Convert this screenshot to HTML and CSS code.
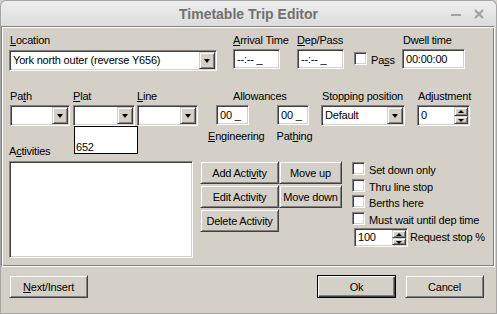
FILE: index.html
```html
<!DOCTYPE html>
<html>
<head>
    <title>Timetable Trip Editor</title>
    <link rel="stylesheet" href="styles.css">
</head>
<body>
    <div class="window">
        <div class="titlebar">
            <span class="title">Timetable Trip Editor</span>
            <div class="wm-buttons">
                <svg class="wm-min" width="12" height="12" viewBox="0 0 12 12"><rect x="1" y="6" width="10" height="2" fill="#a2a2a2"/></svg>
                <svg class="wm-close" width="12" height="12" viewBox="0 0 12 12"><path d="M2 2 L10 10 M10 2 L2 10" stroke="#a2a2a2" stroke-width="2.2"/></svg>
            </div>
        </div>
        <div class="frame">
            <div class="panel">
                <div class="row row-top">
                    <div class="col col-location">
                        <label class="lbl"><u>L</u>ocation</label>
                        <div class="field combo combo-location">
                            <span class="field-text">York north outer (reverse Y656)</span>
                            <span class="drop"></span>
                        </div>
                    </div>
                    <div class="col col-arrival">
                        <label class="lbl"><u>A</u>rrival Time</label>
                        <div class="field edit edit-time"><span class="field-text">--:-- _</span></div>
                    </div>
                    <div class="col col-dep">
                        <label class="lbl"><u>D</u>ep/Pass</label>
                        <div class="field edit edit-time"><span class="field-text">--:-- _</span></div>
                    </div>
                    <div class="check check-pass">
                        <span class="box"></span>
                        <span class="check-label">Pa<u>s</u>s</span>
                    </div>
                    <div class="col col-dwell">
                        <label class="lbl">Dwell time</label>
                        <div class="field edit edit-dwell"><span class="field-text">00:00:00</span></div>
                    </div>
                </div>

                <div class="row row-mid">
                    <div class="col col-path">
                        <label class="lbl">Pa<u>t</u>h</label>
                        <div class="field combo"><span class="drop"></span></div>
                    </div>
                    <div class="col col-plat">
                        <label class="lbl"><u>P</u>lat</label>
                        <div class="field combo combo-plat">
                            <span class="drop"></span>
                            <div class="droplist">
                                <div class="droplist-item"></div>
                                <div class="droplist-item">652</div>
                            </div>
                        </div>
                    </div>
                    <div class="col col-line">
                        <label class="lbl"><u>L</u>ine</label>
                        <div class="field combo"><span class="drop"></span></div>
                    </div>
                    <div class="allowances">
                        <label class="lbl allow-head">Allowances</label>
                        <div class="allow-inputs">
                            <div class="field edit edit-eng"><span class="field-text">00 _</span></div>
                            <div class="field edit edit-pth"><span class="field-text">00 _</span></div>
                        </div>
                        <div class="allow-labels">
                            <span class="lbl"><u>E</u>ngineering</span>
                            <span class="lbl lbl-pathing">Pat<u>h</u>ing</span>
                        </div>
                    </div>
                    <div class="col col-stop">
                        <label class="lbl">Stopping position</label>
                        <div class="field combo">
                            <span class="field-text">Default</span>
                            <span class="drop"></span>
                        </div>
                    </div>
                    <div class="col col-adj">
                        <label class="lbl">Adjustment</label>
                        <div class="field spin">
                            <span class="field-text">0</span>
                            <span class="spin-btns"><span class="spin-up"></span><span class="spin-down"></span></span>
                        </div>
                    </div>
                </div>

                <div class="row row-bottom">
                    <div class="col col-activities">
                        <label class="lbl">A<u>c</u>tivities</label>
                        <div class="field listbox"></div>
                    </div>
                    <div class="activity-btns">
                        <button class="btn">Add Acti<u>v</u>ity</button>
                        <button class="btn">Move up</button>
                        <button class="btn">Edit Activity</button>
                        <button class="btn">Move down</button>
                        <button class="btn">Delete Activity</button>
                    </div>
                    <div class="checks">
                        <div class="check"><span class="box"></span><span class="check-label">Set down only</span></div>
                        <div class="check"><span class="box"></span><span class="check-label">Thru line stop</span></div>
                        <div class="check"><span class="box"></span><span class="check-label">Berths here</span></div>
                        <div class="check"><span class="box"></span><span class="check-label">Must wait until dep time</span></div>
                        <div class="request">
                            <div class="field spin spin-request">
                                <span class="field-text">100</span>
                                <span class="spin-btns"><span class="spin-up"></span><span class="spin-down"></span></span>
                            </div>
                            <span class="check-label">Request stop %</span>
                        </div>
                    </div>
                </div>
            </div>

            <div class="footer">
                <button class="btn btn-footer"><u>N</u>ext/Insert</button>
                <button class="btn btn-footer btn-default">Ok</button>
                <button class="btn btn-footer">Cancel</button>
            </div>
        </div>
    </div>
</body>
</html>
```

FILE: styles.css
```css
body {
    margin: 0;
    font-family: "Liberation Sans", Arial, sans-serif;
    font-size: 11px;
    letter-spacing: -0.2px;
    color: #000;
    background: #d4d0c8;
}

.window {
    width: 497px;
    height: 314px;
    display: flex;
    flex-direction: column;
}

/* title bar */
.titlebar {
    height: 26px;
    box-sizing: border-box;
    border: 1px solid #a6a6a6;
    border-bottom: none;
    border-radius: 6px 6px 0 0;
    background: linear-gradient(#eeeeee, #dcdcdc);
    display: grid;
    grid-template-columns: 1fr auto 1fr;
    align-items: center;
}

.title {
    grid-column: 2;
    font-weight: bold;
    font-size: 14px;
    letter-spacing: 0;
    color: #717171;
    padding-top: 1px;
}

.wm-buttons {
    grid-column: 3;
    justify-self: end;
    display: flex;
    align-items: center;
    gap: 11px;
    margin-right: 11px;
}

.wm-buttons svg {
    display: block;
}

/* window body */
.frame {
    flex: 1;
    display: flex;
    flex-direction: column;
    border: 1px solid #a6a6a6;
    border-top: none;
}

.panel {
    height: 241px;
    box-sizing: border-box;
    border: 1px solid #808080;
    border-right-color: #fff;
    border-bottom-color: #fff;
    box-shadow: inset 1px 1px 0 #fff, inset -1px -1px 0 #808080;
    margin-right: 1px;
}

.row {
    display: flex;
    align-items: flex-start;
}

.col {
    display: flex;
    flex-direction: column;
}

.lbl {
    display: block;
    line-height: 13px;
    white-space: nowrap;
}

/* sunken fields */
.field {
    position: relative;
    box-sizing: border-box;
    background: #fff;
    border: 1px solid;
    border-color: #808080 #fff #fff #808080;
    box-shadow: inset 1px 1px 0 #404040, inset -1px -1px 0 #d4d0c8;
}

.field-text {
    display: block;
    line-height: 13px;
    padding: 3px 0 0 3px;
    white-space: nowrap;
}

.combo {
    height: 21px;
    margin-top: 2px;
}

.edit {
    height: 20px;
    margin-top: 2px;
}

.drop,
.spin-btns span,
.btn {
    background: #d4d0c8;
    border: 1px solid;
    border-color: #d4d0c8 #404040 #404040 #d4d0c8;
    box-shadow: inset 1px 1px 0 #fff, inset -1px -1px 0 #808080;
    box-sizing: border-box;
}

.drop {
    position: absolute;
    top: 1px;
    right: 1px;
    width: 16px;
    height: 17px;
}

.drop:after {
    content: "";
    position: absolute;
    left: 4px;
    top: 6px;
    border-left: 3.5px solid transparent;
    border-right: 3.5px solid transparent;
    border-top: 4px solid #000;
}

/* spin boxes */
.spin {
    height: 21px;
    margin-top: 2px;
}

.spin-btns {
    position: absolute;
    top: 1px;
    right: 1px;
    width: 14px;
    height: 17px;
    display: flex;
    flex-direction: column;
}

.spin-btns span {
    position: relative;
    flex: 1;
}

.spin-up:after,
.spin-down:after {
    content: "";
    position: absolute;
    left: 3px;
    border-left: 3px solid transparent;
    border-right: 3px solid transparent;
}

.spin-up:after {
    top: 2px;
    border-bottom: 3px solid #000;
}

.spin-down:after {
    top: 2px;
    border-top: 3px solid #000;
}

/* top row */
.row-top {
    margin-top: 7px;
}

.col-location {
    margin-left: 7px;
    width: 208px;
}

.col-location .lbl,
.col-dwell .lbl,
.col-stop .lbl,
.col-adj .lbl {
    padding-left: 1px;
}

.col-location .combo {
    margin-top: 3px;
}

.col-arrival {
    margin-left: 16px;
    width: 64px;
}

.col-dep {
    width: 57px;
}

.edit-time {
    width: 47px;
}

.check-pass {
    width: 48px;
    margin-top: 18px;
}

.col-dwell {
    width: 63px;
}

/* checkboxes */
.check {
    display: flex;
    align-items: flex-start;
    height: 16.5px;
}

.box {
    width: 13px;
    height: 13px;
    box-sizing: border-box;
    background: #fff;
    border: 1px solid;
    border-color: #808080 #fff #fff #808080;
    box-shadow: inset 1px 1px 0 #404040, inset -1px -1px 0 #d4d0c8;
    flex: none;
}

.check-label {
    line-height: 13px;
    margin-left: 4px;
    padding-top: 2px;
    white-space: nowrap;
}

/* middle row */
.row-mid {
    margin-top: 19px;
}

.col-path {
    margin-left: 8px;
    width: 60px;
}

.col-plat {
    margin-left: 3px;
    width: 62px;
}

.col-line {
    margin-left: 2px;
    width: 61px;
}

.combo-plat {
    z-index: 2;
}

.droplist {
    position: absolute;
    left: 0;
    top: 20px;
    width: 64px;
    height: 28px;
    box-sizing: border-box;
    background: #fff;
    border: 1px solid #000;
    padding-top: 1px;
}

.droplist-item {
    height: 13px;
    line-height: 13px;
    padding-left: 1px;
}

.allowances {
    margin-left: 10px;
    width: 113px;
}

.allow-head {
    padding-left: 25px;
}

.allow-inputs {
    display: flex;
    margin-left: 8px;
    margin-top: 2px;
}

.edit-eng {
    width: 33px;
    margin-top: 0;
}

.edit-pth {
    width: 32px;
    margin-top: 0;
    margin-left: 28px;
}

.allow-labels {
    display: flex;
    margin-top: 5px;
}

.lbl-pathing {
    margin-left: 12px;
}

.col-stop {
    width: 84px;
}

.col-adj {
    margin-left: 12px;
    width: 53px;
}

/* bottom row */
.row-bottom {
    margin-top: 2px;
}

.col-activities {
    margin-left: 7px;
    width: 184px;
}

.listbox {
    height: 97px;
    margin-top: 3px;
}

.activity-btns {
    margin-left: 7px;
    margin-top: 16px;
    display: grid;
    grid-template-columns: 79px 63px;
    grid-auto-rows: 23px;
    row-gap: 1px;
}

.btn {
    font-family: inherit;
    font-size: 11px;
    letter-spacing: inherit;
    color: #000;
    padding: 0;
    margin: 0;
    cursor: pointer;
}

.checks {
    margin-left: 10px;
    margin-top: 17px;
}

.request {
    display: flex;
    align-items: flex-start;
    margin-left: 2px;
}

.spin-request {
    width: 54px;
    height: 19px;
    margin-top: 0;
}

.spin-request .field-text {
    padding-top: 2px;
}

.spin-request .spin-btns {
    height: 15px;
}

.request .check-label {
    margin-left: 2px;
    padding-top: 3px;
}

/* footer */
.footer {
    display: flex;
    margin-top: 8px;
}

.btn-footer {
    width: 79px;
    height: 23px;
    margin-left: 8px;
}

.btn-default {
    margin-left: 229px;
    border-color: #000;
    box-shadow: inset 1px 1px 0 #fff, inset -1px -1px 0 #404040, inset -2px -2px 0 #808080;
}

.btn-default + .btn-footer {
    margin-left: 9px;
}
```
